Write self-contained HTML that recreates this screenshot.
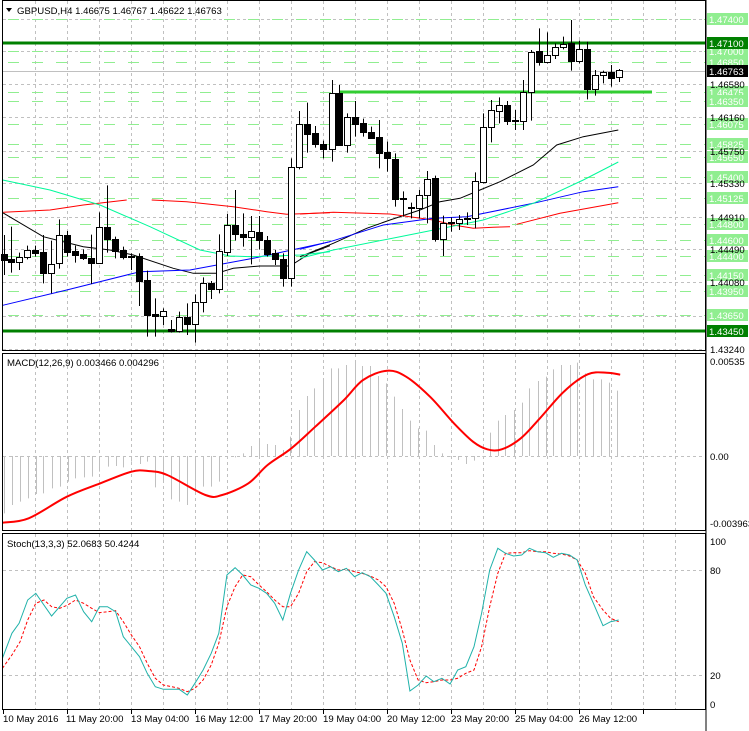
<!DOCTYPE html>
<html><head><meta charset="utf-8"><style>
html,body{margin:0;padding:0;background:#fff;}
svg{display:block;font-family:"Liberation Sans",sans-serif;}
</style></head><body>
<svg id="s" width="749" height="731" viewBox="0 0 749 731" xmlns="http://www.w3.org/2000/svg">
<rect width="749" height="731" fill="#fff"/>
<g id="grid"></g>
<g id="levels"></g>
<g id="mas" fill="none" stroke-width="1"></g>
<g id="candles"></g>
<g id="macd"></g>
<g id="stoch" fill="none"></g>
<g fill="none" stroke="#000" stroke-width="1">
<rect x="2.5" y="0.5" width="703" height="350"/>
<rect x="2.5" y="353.5" width="703" height="177"/>
<rect x="2.5" y="533.5" width="703" height="176"/>
</g>
<g id="labels" font-size="9.6"></g>
<g font-size="9.6" fill="#000">
<path d="M6 8 L12 8 L9 12 Z" fill="#000"/>
<text x="17" y="14">GBPUSD,H4  1.46675 1.46767 1.46622 1.46763</text>
<text x="7" y="366">MACD(12,26,9) 0.003466 0.004296</text>
<text x="7" y="547">Stoch(13,3,3) 52.0683 50.4244</text>
<text x="710" y="365">0.00535</text>
<text x="710" y="460">0.00</text>
<text x="710" y="527">-0.003963</text>
<text x="710" y="545">100</text>
<text x="710" y="574">80</text>
<text x="710" y="679">20</text>
<text x="710" y="708">0</text>
<text x="3" y="722">10 May 2016</text>
<text x="66" y="722">11 May 20:00</text>
<text x="131" y="722">13 May 04:00</text>
<text x="195" y="722">16 May 12:00</text>
<text x="259" y="722">17 May 20:00</text>
<text x="323" y="722">19 May 04:00</text>
<text x="387" y="722">20 May 12:00</text>
<text x="451" y="722">23 May 20:00</text>
<text x="515" y="722">25 May 04:00</text>
<text x="579" y="722">26 May 12:00</text>
<text x="710" y="88">1.46580</text>
<text x="710" y="121">1.46160</text>
<text x="710" y="155">1.45750</text>
<text x="710" y="187">1.45330</text>
<text x="710" y="221">1.44910</text>
<text x="710" y="253">1.44490</text>
<text x="710" y="286">1.44080</text>
<text x="710" y="353">1.43240</text>
</g>
</svg>
<script>
var NS="http://www.w3.org/2000/svg";
function el(p,t,a){var e=document.createElementNS(NS,t);for(var k in a)e.setAttribute(k,a[k]);document.getElementById(p).appendChild(e);return e;}
var g="grid";
for(var x=35;x<705;x+=32){
 [[1,350],[354,530],[534,709]].forEach(function(r){el(g,"line",{x1:x+.5,y1:r[0],x2:x+.5,y2:r[1],stroke:"#c0c0c0","stroke-dasharray":"3,3"});});
}
[19,51,84,117,151,183,217,249,282,316,349].forEach(function(y){el(g,"line",{x1:3,y1:y+.5,x2:705,y2:y+.5,stroke:"#c0c0c0","stroke-dasharray":"3,3"});});
[456,570,675].forEach(function(y){el(g,"line",{x1:3,y1:y+.5,x2:705,y2:y+.5,stroke:"#c0c0c0","stroke-dasharray":"3,3"});});
for(var x=3;x<705;x+=64){el(g,"line",{x1:x+.5,y1:709,x2:x+.5,y2:714,stroke:"#000"});}
var lv=[[19,"1.47400"],[51,"1.47000"],[62,"1.46850"],[92,"1.46475"],[101,"1.46350"],[124,"1.46075"],[144,"1.45825"],[157,"1.45650"],[177,"1.45400"],[198,"1.45125"],[224,"1.44800"],[240,"1.44600"],[256,"1.44400"],[275,"1.44150"],[291,"1.43950"],[315,"1.43650"]];
lv.forEach(function(l){el("levels","line",{x1:8,y1:l[0]+.5,x2:705,y2:l[0]+.5,stroke:"#90ee90","stroke-dasharray":"11,13"});});
el("levels","line",{x1:3,y1:71.5,x2:705,y2:71.5,stroke:"#c0c0c0"});
el("levels","line",{x1:3,y1:43,x2:705,y2:43,stroke:"#008000","stroke-width":3});
el("levels","line",{x1:3,y1:331,x2:705,y2:331,stroke:"#008000","stroke-width":3});
el("levels","line",{x1:340,y1:92,x2:652,y2:92,stroke:"#32cd32","stroke-width":3});
function lab(y,t,bg,fg){el("labels","rect",{x:707,y:y-6,width:41,height:12,fill:bg});var e=el("labels","text",{x:709,y:y+4,fill:fg});e.textContent=t;}
lv.forEach(function(l){lab(l[0],l[1],"#90ee90","#fff");});
lab(43,"1.47100","#008000","#fff");lab(331,"1.43450","#008000","#fff");lab(71,"1.46763","#000","#fff");
el("labels","line",{x1:706,y1:0,x2:706,y2:731,stroke:"#000"});
function pl(pts,f,col,extra){var s=pts.map(function(p){var q=f(p[0],p[1]);return q[0].toFixed(1)+","+q[1].toFixed(1);}).join(" ");var a={points:s,stroke:col,fill:"none"};for(var k in extra)a[k]=extra[k];return a;}
function z4(x,y){return [x/3,80+y/3];}function z5(x,y){return [300+x/3,10+y/3];}function z3(x,y){return [x/2.093,340+y/3];}
el("mas","polyline",pl([[8,398],[130,470],[250,500],[330,510],[400,525],[520,565],[580,580],[650,580],[700,565],[780,558],[870,558],[930,520],[990,497]],z4,"#000"));
el("mas","polyline",pl([[0,740],[100,700],[200,655],[270,630],[360,600],[420,575],[480,565],[540,540],[600,515],[700,465],[770,405],[850,380],[955,360]],z5,"#000"));
el("mas","polyline",pl([[10,397],[150,390],[250,375],[380,360]],z4,"#f00"));
el("mas","polyline",pl([[455,360],[560,365],[700,380],[800,395],[860,403],[990,398]],z4,"#f00"));
el("mas","polyline",pl([[0,612],[100,607],[270,612],[400,630],[460,645],[520,655],[580,652],[630,650]],z5,"#f00"));
el("mas","polyline",pl([[650,643],[780,610],[955,578]],z5,"#f00"));
el("mas","polyline",pl([[8,676],[200,630],[420,575],[570,570],[760,535],[990,485]],z4,"#0000ff"));
el("mas","polyline",pl([[0,718],[100,692],[250,645],[400,625],[500,620],[700,580],[850,545],[955,530]],z5,"#0000ff"));
el("mas","polyline",pl([[8,300],[150,330],[300,375],[450,440],[600,510],[690,528],[760,530],[900,525],[990,515]],z4,"#00fa9a"));
el("mas","polyline",pl([[0,745],[100,720],[300,680],[450,650],[550,630],[700,580],[850,510],[955,456]],z5,"#00fa9a"));
var c4=[[12,523,540,465,585,1],[34,537,547,440,578,1],[58,532,547,518,570,0],[82,510,532,497,538,0],[106,510,518,497,530,1],[130,516,580,465,610,1],[154,552,580,482,640,0],[178,466,550,418,566,0],[202,466,515,453,530,1],[226,513,524,497,548,1],[250,522,535,508,540,1],[274,534,548,464,612,1],[298,441,548,397,550,0],[322,441,476,316,518,1],[346,476,514,470,535,1],[370,511,532,500,538,1],[394,527,531,520,570,1],[418,527,602,520,678,1],[442,601,704,572,770,1],[466,703,707,655,770,1],[490,693,707,685,735,0],[514,747,752,720,758,1],[538,712,752,695,758,0],[562,712,731,670,765,1],[586,666,731,643,788,0],[610,610,667,592,697,0],[634,608,626,603,657,1],[658,514,626,463,640,0],[682,436,515,402,528,0],[706,436,463,330,482,1],[730,462,470,400,500,1],[754,454,470,408,553,0],[778,456,481,408,508,1],[802,481,521,468,530,1],[826,519,537,510,555,1],[850,538,593,520,620,1],[874,262,593,235,620,0],[898,132,262,93,268,0],[922,132,161,68,218,1],[946,158,193,138,203,1],[970,192,208,182,235,1]];
var c5=[[95,250,418,210,455,0],[118,250,406,225,406,1],[142,322,406,310,428,0],[166,320,341,273,380,1],[190,340,366,326,380,1],[213,366,383,350,385,1],[238,382,430,330,475,1],[262,427,445,395,485,1],[286,448,566,430,590,1],[310,565,568,544,620,1],[334,592,595,578,625,1],[358,556,594,540,625,0],[382,508,556,483,640,0],[406,505,688,497,695,1],[430,640,688,617,738,0],[454,636,640,622,665,1],[478,628,640,615,660,0],[502,625,628,607,645,1],[526,514,625,487,655,0],[550,352,517,310,520,0],[574,300,352,270,397,0],[598,286,304,262,340,0],[622,286,332,273,345,1],[646,330,333,300,360,1],[670,246,332,210,360,0],[694,125,246,120,332,0],[718,124,157,55,167,1],[742,135,157,67,160,0],[766,111,136,100,147,0],[790,101,111,80,118,0],[814,100,152,30,182,1],[838,117,152,92,160,0],[862,117,236,95,268,1],[886,196,236,180,257,0],[910,187,194,182,220,0],[934,185,203,165,230,1],[958,181,202,177,216,0]];
function cd(c,f){var a=f(c[0],c[1]),b=f(c[0],c[2]),h=f(c[0],c[3]),l=f(c[0],c[4]);var x=Math.round(a[0])+.5;
el("candles","line",{x1:x,y1:h[1],x2:x,y2:l[1],stroke:"#000"});
var y1=Math.round(a[1]),y2=Math.round(b[1]);if(y2-y1<1)y2=y1+1;
el("candles","rect",{x:x-3,y:y1+.5,width:6,height:y2-y1,fill:c[5]?"#000":"#fff",stroke:"#000"});}
c4.forEach(function(c){cd(c,z4);});c5.forEach(function(c){cd(c,z5);});
var h=[[8,520],[25,495],[42,485],[58,475],[75,462],[91,460],[108,445],[125,440],[142,425],[158,415],[175,412],[192,410],[208,395],[225,380],[242,378],[258,382],[275,365],[292,372],[308,365],[325,442],[342,425],[358,478],[375,485],[392,495],[408,460],[425,440],[442,440],[458,425],[475,356],[492,352],[508,340],[525,318],[542,300],[558,312],[575,315],[592,330],[608,290],[625,210],[642,168],[658,145],[675,122],[692,85],[708,85],[725,75],[742,68],[758,78],[775,78],[792,108],[808,130],[825,170],[842,207],[858,242],[875,265],[892,272],[908,315],[925,340],[942,350],[958,360],[975,372],[992,362],[1008,350],[1025,278],[1042,242],[1058,225],[1075,210],[1092,188],[1108,145],[1125,123],[1142,110],[1158,88],[1175,75],[1192,75],[1208,68],[1225,100],[1242,118],[1258,118],[1275,128],[1292,152]];
h.forEach(function(p){var q=z3(p[0],p[1]);var x=Math.round(q[0])+.5;el("macd","line",{x1:x,y1:456,x2:x,y2:q[1],stroke:"#c0c0c0"});});
// smooth MACD signal via Catmull-Rom
var mp=[[5,548],[60,535],[140,470],[210,430],[275,395],[310,393],[350,405],[430,465],[465,465],[520,430],[560,375],[610,325],[660,260],[720,180],[760,120],[810,92],[850,110],[900,170],[950,250],[990,305],[1020,328],[1050,328],[1090,295],[1130,235],[1180,155],[1230,103],[1270,98],[1298,104]].map(function(p){return z3(p[0],p[1]);});
var d="M"+mp[0][0].toFixed(1)+" "+mp[0][1].toFixed(1);
for(var i=0;i<mp.length-1;i++){var p0=mp[Math.max(i-1,0)],p1=mp[i],p2=mp[i+1],p3=mp[Math.min(i+2,mp.length-1)];
d+=" C"+(p1[0]+(p2[0]-p0[0])/6).toFixed(1)+" "+(p1[1]+(p2[1]-p0[1])/6).toFixed(1)+" "+(p2[0]-(p3[0]-p1[0])/6).toFixed(1)+" "+(p2[1]-(p3[1]-p1[1])/6).toFixed(1)+" "+p2[0].toFixed(1)+" "+p2[1].toFixed(1);}
el("macd","path",{d:d,stroke:"#f00","stroke-width":2,fill:"none"});
el("stoch","polyline",pl([[5,985],[25,945],[42,905],[58,840],[75,790],[92,780],[108,800],[125,805],[142,795],[158,780],[175,790],[192,805],[208,818],[225,815],[242,812],[258,845],[275,885],[292,920],[308,970],[325,1015],[342,1035],[375,1045],[392,1055],[408,1045],[425,1020],[442,975],[458,910],[475,800],[492,740],[508,705],[525,710],[542,735],[558,755],[575,780],[592,800],[608,800],[625,760],[642,695],[658,665],[675,668],[692,680],[708,690],[725,688],[742,695],[758,700],[775,708],[792,720],[808,740],[825,790],[842,870],[858,960],[875,1020],[892,1028],[908,1025],[925,1020],[942,1020],[958,1015],[975,1000],[992,990],[1008,920],[1025,800],[1042,700],[1058,640],[1075,638],[1092,638],[1108,632],[1125,635],[1142,635],[1158,640],[1175,642],[1192,648],[1208,660],[1225,700],[1242,770],[1262,810],[1278,835],[1295,845]],z3,"#f00",{"stroke-dasharray":"3,2"}));
el("stoch","polyline",pl([[5,955],[25,880],[40,850],[58,780],[75,760],[108,828],[140,775],[158,765],[175,815],[192,845],[208,800],[225,800],[242,815],[258,890],[275,920],[292,950],[308,1000],[325,1040],[342,1048],[375,1048],[392,1065],[408,1030],[425,990],[442,940],[458,880],[475,705],[492,683],[508,705],[525,735],[542,745],[558,760],[575,790],[592,840],[608,760],[625,690],[642,635],[658,660],[675,690],[692,680],[708,695],[725,685],[742,710],[758,698],[775,710],[792,735],[808,760],[825,830],[842,910],[858,1053],[875,1035],[892,1008],[908,1025],[925,1015],[942,1032],[958,990],[975,980],[992,920],[1008,820],[1025,690],[1042,625],[1058,640],[1075,648],[1092,645],[1108,625],[1125,635],[1142,638],[1158,652],[1175,640],[1192,645],[1208,660],[1225,735],[1242,790],[1262,857],[1278,845],[1295,840]],z3,"#20b2aa"));
</script>
</body></html>
